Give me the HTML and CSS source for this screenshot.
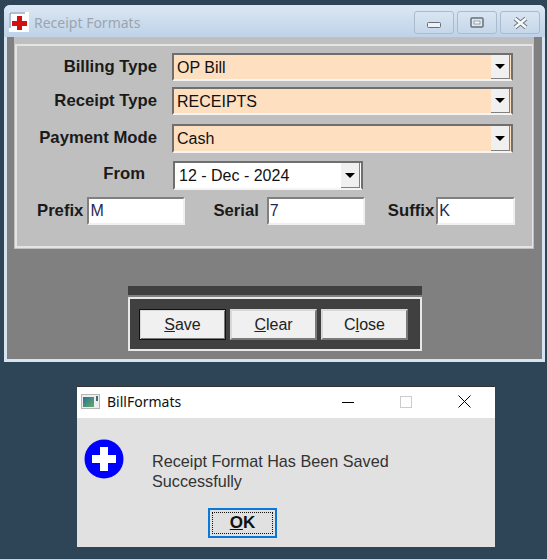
FILE: index.html
```html
<!DOCTYPE html>
<html lang="en">
<head>
    <meta charset="UTF-8">
    <meta name="viewport" content="width=device-width, initial-scale=1.0">
    <title>Receipt Formats</title>
    <link rel="stylesheet" href="styles.css">
</head>
<body>
    <div class="window">
        <div class="titlebar">
            <span class="app-icon">
                <svg width="20" height="20" viewBox="0 0 20 20">
                    <rect width="20" height="20" fill="#fff"/>
                    <path d="M1 1h15M1 1v15" stroke="#5f7fb5" stroke-width="1" fill="none"/>
                    <path d="M8 4h5v5h5v5h-5v4H8v-4H3V9h5z" fill="#d3100f"/>
                </svg>
            </span>
            <span class="window-title">Receipt Formats</span>
            <div class="caption-buttons">
                <span class="caption-btn">
                    <svg width="14" height="8" viewBox="0 0 14 8"><rect x="0.5" y="1.5" width="13" height="5" rx="1" fill="#eef2f6" stroke="#66707a"/></svg>
                </span>
                <span class="caption-btn caption-btn-max">
                    <svg width="14" height="11" viewBox="0 0 14 11"><rect x="1" y="1" width="12" height="9" rx="1" fill="#dfe7ef" stroke="#66707a" stroke-width="1.5"/><rect x="4" y="4" width="6" height="3" fill="#f4f7fa" stroke="#66707a" stroke-width="0.6"/></svg>
                </span>
                <span class="caption-btn caption-btn-max">
                    <svg width="15" height="12" viewBox="0 0 15 12"><path d="M2 1.5l11 9M13 1.5l-11 9" stroke="#6a747e" stroke-width="4.4"/><path d="M2 1.5l11 9M13 1.5l-11 9" stroke="#f6f8fa" stroke-width="2.6"/></svg>
                </span>
            </div>
        </div>

        <div class="window-body">
            <div class="sheet">
                <div class="group">
                    <div class="row row-billing">
                        <label class="field-label">Billing Type</label>
                        <div class="combo combo-peach">
                            <span class="combo-value">OP Bill</span>
                            <span class="combo-btn"><span class="arrow"></span></span>
                        </div>
                    </div>
                    <div class="row row-receipt">
                        <label class="field-label">Receipt Type</label>
                        <div class="combo combo-peach">
                            <span class="combo-value">RECEIPTS</span>
                            <span class="combo-btn"><span class="arrow"></span></span>
                        </div>
                    </div>
                    <div class="row row-payment">
                        <label class="field-label">Payment Mode</label>
                        <div class="combo combo-peach">
                            <span class="combo-value">Cash</span>
                            <span class="combo-btn"><span class="arrow"></span></span>
                        </div>
                    </div>
                    <div class="row row-from">
                        <label class="field-label field-label-from">From</label>
                        <div class="combo combo-date">
                            <span class="combo-value">12 - Dec - 2024</span>
                            <span class="combo-btn"><span class="arrow"></span></span>
                        </div>
                    </div>
                    <div class="row row-codes">
                        <label class="code-label code-prefix">Prefix</label>
                        <div class="textbox textbox-prefix">M</div>
                        <label class="code-label code-serial">Serial</label>
                        <div class="textbox textbox-serial">7</div>
                        <label class="code-label code-suffix">Suffix</label>
                        <div class="textbox textbox-suffix">K</div>
                    </div>
                </div>
            </div>

            <div class="actions-bar"></div>
            <div class="actions">
                <button class="btn btn-default" type="button"><u>S</u>ave</button>
                <button class="btn" type="button"><u>C</u>lear</button>
                <button class="btn" type="button">C<u>l</u>ose</button>
            </div>
        </div>
    </div>

    <div class="dialog">
        <div class="dialog-titlebar">
            <svg class="dialog-icon" width="19" height="15" viewBox="0 0 19 15">
                <defs>
                    <linearGradient id="appFill" x1="0" y1="0" x2="1" y2="1">
                        <stop offset="0" stop-color="#2f6f96"/>
                        <stop offset="1" stop-color="#5fae6a"/>
                    </linearGradient>
                </defs>
                <rect x="0.5" y="0.5" width="18" height="14" fill="#eeeeee" stroke="#b5b5b5"/>
                <rect x="2" y="3" width="11" height="10" fill="url(#appFill)"/>
                <rect x="15" y="2" width="2" height="5" fill="#4a6a70"/>
            </svg>
            <span class="dialog-title">BillFormats</span>
            <div class="dialog-caption">
                <svg width="12" height="12" viewBox="0 0 12 12"><path d="M0 6.5h12" stroke="#000"/></svg>
                <svg width="12" height="12" viewBox="0 0 12 12"><rect x="0.5" y="0.5" width="11" height="11" fill="none" stroke="#ccc"/></svg>
                <svg width="13" height="13" viewBox="0 0 13 13"><path d="M0.5 0.5l12 12M12.5 0.5l-12 12" stroke="#000"/></svg>
            </div>
        </div>
        <div class="dialog-body">
            <div class="dialog-message">
                <svg class="info-icon" width="40" height="40" viewBox="0 0 40 40">
                    <circle cx="20" cy="20" r="19.5" fill="#0000ff"/>
                    <path d="M16 8h8v8h8v8h-8v8h-8v-8H8v-8h8z" fill="#fff"/>
                </svg>
                <p class="dialog-text">Receipt Format Has Been Saved Successfully</p>
            </div>
            <button class="ok-btn" type="button"><span class="ok-focus"><u>O</u>K</span></button>
        </div>
    </div>
</body>
</html>
```

FILE: styles.css
```css
* {
    box-sizing: border-box;
}

body {
    margin: 0;
    height: 559px;
    overflow: hidden;
    background-color: #2e4558;
    font-family: "Liberation Sans", Arial, sans-serif;
    font-size: 16px;
    color: #111;
}

/* main window */
.window {
    position: absolute;
    left: 4px;
    top: 5px;
    width: 541px;
    height: 357px;
    border-radius: 6px 6px 0 0;
    background: #d6e3f0;
    display: flex;
    flex-direction: column;
    padding: 0 3px 3px;
}

.titlebar {
    height: 32px;
    margin: 0 -3px;
    padding: 7px 5px 0 5px;
    display: flex;
    align-items: flex-start;
    border-radius: 6px 6px 0 0;
    background: linear-gradient(to bottom, #dce7f3, #bed2e8);
}

.app-icon {
    width: 20px;
    height: 20px;
    display: block;
}

.app-icon svg {
    display: block;
}

.window-title {
    margin-left: 5px;
    margin-top: 1px;
    font-family: "Noto Sans", sans-serif;
    font-size: 14px;
    line-height: 20px;
    color: #9aa5b0;
}

.caption-buttons {
    margin-left: auto;
    margin-top: -1px;
    display: flex;
    gap: 3px;
}

.caption-btn {
    width: 40px;
    height: 23px;
    display: flex;
    align-items: center;
    justify-content: center;
    padding-top: 4px;
    border: 1px solid #a9bbce;
    border-radius: 3px;
    background: linear-gradient(to bottom, #d9e5f1, #c6d7ea);
}

.caption-btn-max {
    padding-top: 0;
}

.window-body {
    flex: 1;
    background: #808080;
    padding: 0 7px;
}

.sheet {
    width: 520px;
    height: 212px;
    padding: 7px 1px 1px 1px;
    background: #bfbfbf;
}

.group {
    height: 204px;
    width: 518px;
    border: 2px solid #e4e4e4;
    border-right-width: 1px;
    padding-top: 7px;
}

.row {
    display: flex;
    align-items: center;
}

.row-billing { height: 28px; margin-bottom: 6px; }
.row-receipt { height: 28px; margin-bottom: 9px; }
.row-payment { height: 29px; margin-bottom: 8px; }
.row-from { height: 29px; margin-bottom: 7px; }
.row-codes { height: 28px; }

.field-label {
    width: 140px;
    margin-right: 15px;
    padding-bottom: 1px;
    text-align: right;
    font-size: 16.7px;
    font-weight: bold;
    color: #1a1a1a;
}

.field-label-from {
    width: 128px;
    margin-right: 28px;
    padding-bottom: 4px;
}

.combo {
    height: 100%;
    display: flex;
    align-items: center;
    justify-content: space-between;
    padding: 0 1px 0 3px;
    border-top: 2px solid #6f6f6f;
    border-left: 2px solid #6f6f6f;
    border-right: 2px solid #6f6f6f;
    border-bottom: 2px solid #f4f4f4;
}

.combo-peach {
    width: 341px;
    background: #fedfc0;
}

.combo-date {
    width: 190px;
    padding-left: 4px;
    background: #fff;
}

.combo-value {
    padding-top: 1px;
    line-height: 20px;
}

.combo-btn {
    width: 19px;
    align-self: stretch;
    display: flex;
    align-items: center;
    justify-content: center;
    background: #f0f0f0;
    border-right: 1px solid #808080;
    border-bottom: 1px solid #808080;
}

.arrow {
    width: 0;
    height: 0;
    border-left: 5px solid transparent;
    border-right: 5px solid transparent;
    border-top: 5px solid #000;
}

.code-label {
    font-size: 16.7px;
    font-weight: bold;
    color: #1a1a1a;
}

.code-prefix { margin-left: 20px; margin-right: 4px; }
.code-serial { margin-left: 28px; margin-right: 8px; }
.code-suffix { margin-left: 23px; margin-right: 2px; }

.textbox {
    height: 100%;
    padding-left: 1px;
    line-height: 24px;
    background: #fff;
    border-top: 2px solid #808080;
    border-left: 2px solid #808080;
    border-right: 2px solid #f0f0f0;
    border-bottom: 2px solid #f0f0f0;
    color: #1f2a55;
}

.textbox-prefix { width: 98px; }
.textbox-serial { width: 98px; }
.textbox-suffix { width: 79px; }

.actions-bar {
    width: 294px;
    height: 9px;
    margin: 37px 0 2px 114px;
    background: #404040;
}

.actions {
    width: 294px;
    height: 54px;
    margin-left: 114px;
    padding: 10px 11px 0 9px;
    display: flex;
    gap: 4px;
    align-items: flex-start;
    background: #404040;
    border: 2px solid #e8e8e8;
}

.btn {
    width: 87px;
    height: 31px;
    padding: 0;
    font-family: inherit;
    font-size: 16px;
    color: #222;
    background: #f0f0f0;
    border: 2px solid #d8d8d8;
    border-right-color: #7a7a7a;
    border-bottom-color: #7a7a7a;
}

.btn-default {
    border: 1px solid #111;
    box-shadow: inset 1px 1px #d8d8d8, inset -1px -1px #7a7a7a;
}

/* message box */
.dialog {
    position: absolute;
    left: 77px;
    top: 386px;
    width: 418px;
    height: 161px;
    background: #e1e1e1;
}

.dialog-titlebar {
    height: 32px;
    display: flex;
    align-items: center;
    padding-bottom: 2px;
    background: #fff;
    border-top: 1px solid #333;
}

.dialog-icon {
    display: block;
    margin-left: 4px;
}

.dialog-title {
    margin-left: 7px;
    font-family: "Noto Sans", sans-serif;
    font-size: 14px;
    color: #111;
}

.dialog-caption {
    margin-left: auto;
    margin-right: 24px;
    display: flex;
    align-items: center;
    gap: 46px;
}

.dialog-caption svg {
    display: block;
}

.dialog-body {
    display: flex;
    flex-direction: column;
    align-items: flex-start;
}

.dialog-message {
    display: flex;
    align-items: flex-start;
    height: 90px;
    padding: 21px 0 0 7px;
}

.info-icon {
    flex: none;
}

.dialog-text {
    width: 262px;
    margin: 12px 0 0 28px;
    font-size: 16.2px;
    line-height: 20px;
    color: #333;
}

.ok-btn {
    width: 69px;
    height: 30px;
    margin-left: 131px;
    padding: 2px;
    font-family: inherit;
    font-size: 17px;
    font-weight: bold;
    color: #111;
    background: #e1e1e1;
    border: 2px solid #0a78d7;
}

.ok-focus {
    display: block;
    height: 100%;
    line-height: 20px;
    border: 1px dotted #111;
}
```
